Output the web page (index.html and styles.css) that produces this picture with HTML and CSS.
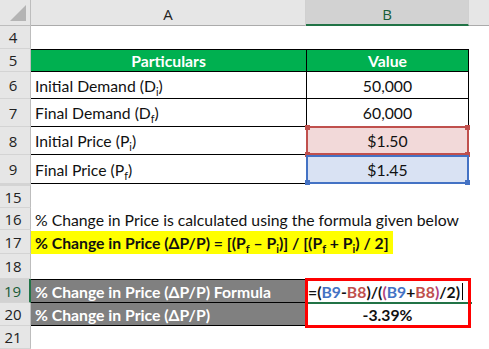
FILE: index.html
```html
<!DOCTYPE html>
<html>
<head>
<meta charset="utf-8">
<link rel="stylesheet" href="styles.css">
</head>
<body>
<div class="sheet">
  <div class="corner"><span class="tri"></span></div>
  <div class="colh">A</div>
  <div class="colh sel">B</div>
  <div class="colh rest"></div>

  <div class="rowh">4</div><div class="c"></div><div class="c"></div><div class="c"></div>

  <div class="rowh">5</div><div class="c head">Particulars</div><div class="c head bl">Value</div><div class="c"></div>

  <div class="rowh">6</div><div class="c t"><span>Initial Demand (D<sub>i</sub>)</span></div><div class="c t bl num">50,000</div><div class="c"></div>
  <div class="rowh">7</div><div class="c t"><span>Final Demand (D<sub>f</sub>)</span></div><div class="c t bl num">60,000</div><div class="c"></div>
  <div class="rowh">8</div><div class="c t"><span>Initial Price (P<sub>i</sub>)</span></div><div class="c t bl num pink"><span class="hl red">$1.50</span></div><div class="c"></div>
  <div class="rowh">9</div><div class="c t bb"><span>Final Price (P<sub>f</sub>)</span></div><div class="c t bl bb num blue"><span class="hl bluel">$1.45</span></div><div class="c"></div>

  <div class="rowh dbl">15</div><div class="c"></div><div class="c"></div><div class="c"></div>
  <div class="rowh">16</div><div class="c span text16">% Change in Price is calculated using the formula given below</div>
  <div class="rowh">17</div><div class="c span"><span class="yellow">% Change in Price (ΔP/P) = [(P<sub>f</sub> – P<sub>i</sub>)] / [(P<sub>f</sub> + P<sub>i</sub>) / 2]</span></div>
  <div class="rowh">18</div><div class="c"></div><div class="c"></div><div class="c"></div>
  <div class="rowh selr">19</div><div class="c grey">% Change in Price (ΔP/P) Formula</div><div class="c fcell"><span class="frm">=(<b class="rb">B9</b>-<b class="rr">B8</b>)/(<b class="pp">(</b><b class="rb">B9</b>+<b class="rr">B8</b><b class="pp">)</b>/2)</span><span class="caret"></span><span class="uline"></span></div><div class="c"></div>
  <div class="rowh">20</div><div class="c grey g2">% Change in Price (ΔP/P)</div><div class="c res">-3.39%</div><div class="c"></div>
  <div class="rowh">21</div><div class="c"></div><div class="c"></div><div class="c"></div>
  <div class="redbox"></div>
</div>
</body>
</html>
```
FILE: styles.css
```css
* { box-sizing: border-box; }
html, body { margin: 0; padding: 0; background: #fff; }
body { width: 489px; height: 349px; overflow: hidden; font-family: Lato, "Open Sans", sans-serif; }
.sheet {
  position: relative;
  display: grid;
  grid-template-columns: 31px 275px 163px 20px;
  grid-template-rows: 26px 23px 23px 27px 28px 28px 29px 24px 22px 24px 25px 24px 23px 23px;
  width: 489px;
  height: 349px;
  color: #111;
  font-size: 15.75px;
}
.corner { background: #e6e6e6; border-right: 1px solid #bdbdbd; border-bottom: 1px solid #bdbdbd; position: relative; }
.tri { position: absolute; right: 4px; bottom: 4px; width: 0; height: 0; border-left: 16px solid transparent; border-bottom: 16px solid #b4b4b4; }
.colh { background: #e6e6e6; border-bottom: 1px solid #ababab; border-right: 1px solid #d0d0d0; display: flex; align-items: center; justify-content: center; color: #222; font-family: "Open Sans", sans-serif; font-size: 15px; padding-top: 2px; }
.colh.sel { background: #d2d2d2; border-bottom: 2px solid #217346; color: #185c37; padding-top: 4px; }
.colh.rest { border-right: none; }
.rowh { background: #e6e6e6; border-right: 1px solid #bdbdbd; border-bottom: 1px solid #d4d4d4; display: flex; align-items: center; justify-content: center; color: #222; font-family: "Open Sans", sans-serif; font-size: 15px; padding-right: 4px; }
.rowh.dbl { border-top: 2px solid #d4d4d4; }
.rowh.selr { background: #d2d2d2; border-right: 2px solid #217346; color: #185c37; }
.c { display: flex; align-items: center; white-space: nowrap; position: relative; }
.head { background: #00b050; color: #fff; font-weight: bold; justify-content: center; border-top: 1px solid #000; border-bottom: 1px solid #000; }
.head.bl { border-left: 1px solid #000; border-right: 1px solid #000; }
.t { border-bottom: 1px solid #000; padding-left: 4px; }
.t.bl { border-left: 1px solid #000; border-right: 1px solid #000; padding-left: 0; }
.num { justify-content: center; }
sub { font-size: 0.68em; vertical-align: sub; line-height: 0; }
.hl { position: absolute; inset: -1px -1px -1px -1px; display: flex; align-items: center; justify-content: center; }
.hl.red { background: #f2d9d9; border: 2px solid #c0504d; }
.hl.bluel { background: #d9e2f3; border: 2px solid #4472c4; top: 0; }
.hl::before, .hl::after { content: ""; position: absolute; width: 5px; height: 5px; }
.hl.red::before { background: #c0504d; left: -3px; top: -3px; box-shadow: 0 27px 0 #c0504d, 160px 0 0 #c0504d, 160px 27px 0 #c0504d; }
.hl.bluel::before { background: #4472c4; left: -3px; bottom: -3px; box-shadow: 160px 0 0 #4472c4; }
.span { grid-column: 2 / span 3; padding-left: 4px; }
.yellow { background: #ffff00; font-weight: bold; padding: 2px 4px 2px 4px; margin-left: -4px; }
.grey { background: #808080; color: #fff; font-weight: bold; padding-left: 4px; border-top: 1px solid #000; border-bottom: 1px solid #000; }
.g2 { border-top: none; }
.fcell { font-weight: bold; padding-left: 2px; }
.frm b { font-weight: bold; }
.rb { color: #4472c4; }
.rr { color: #c0504d; }
.pp { color: #b0417f; }
.caret { display: inline-block; width: 1px; height: 17px; background: #000; margin-left: 2px; }
.uline { position: absolute; left: 0; right: -3px; bottom: -1px; height: 2px; background: #217346; }
.res { font-weight: bold; justify-content: center; }
.redbox { position: absolute; left: 305px; top: 278px; width: 166px; height: 50px; border: 3px solid #ff0000; pointer-events: none; }
```
